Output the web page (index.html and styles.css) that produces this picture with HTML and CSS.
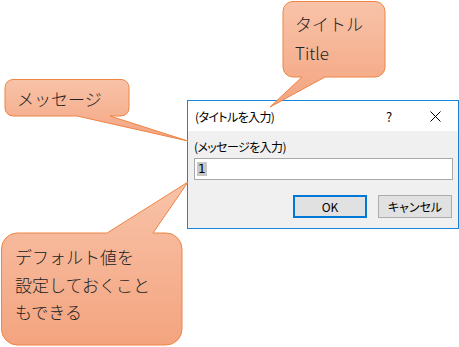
FILE: index.html
```html
<!DOCTYPE html>
<html lang="ja">
<head>
<meta charset="UTF-8" />
<meta name="viewport" content="width=device-width, initial-scale=1.0" />
<title>InputBox</title>
<link rel="stylesheet" href="styles.css">
</head>
<body>

<div class="dialog">
  <div class="titlebar">
    <span class="title">(タイトルを入力)</span>
    <span class="tb-btn">?</span>
    <span class="tb-btn">
      <svg width="11" height="11" viewBox="0 0 11 11"><path d="M0.5 0.5 L10.5 10.5 M10.5 0.5 L0.5 10.5" stroke="#000" stroke-width="1" fill="none"/></svg>
    </span>
  </div>
  <div class="content">
    <div class="prompt">(メッセージを入力)</div>
    <div class="textbox"><span class="sel">1</span></div>
    <div class="buttons">
      <div class="btn btn-default">OK</div>
      <div class="btn">キャンセル</div>
    </div>
  </div>
</div>

<!-- callouts drawn over the dialog -->
<svg class="callouts" width="459" height="347" viewBox="0 0 459 347">
  <defs>
    <linearGradient id="fill" x1="0" y1="0" x2="0" y2="1">
      <stop offset="0" stop-color="#f8c3a9"/>
      <stop offset="1" stop-color="#f4a47f"/>
    </linearGradient>
  </defs>
  <path d="M13,79.5 H121 A8 8 0 0 1 129,87.5 V108 A8 8 0 0 1 121,116 H110 L188,141 L77,116 H13 A8 8 0 0 1 5,108 V87.5 A8 8 0 0 1 13,79.5 Z"/>
  <path d="M293,1.5 H375 A10 10 0 0 1 385,11.5 V67 A10 10 0 0 1 375,77 H325 L270,107 L302,77 H293 A10 10 0 0 1 283,67 V11.5 A10 10 0 0 1 293,1.5 Z"/>
  <path d="M17,233 H107 L188,182 L153,233 H166 A16 16 0 0 1 182,249 V329 A16 16 0 0 1 166,345 H17 A16 16 0 0 1 1.5,329 V249 A16 16 0 0 1 17,233 Z"/>
</svg>

<div class="note note-msg">メッセージ</div>
<div class="note note-title">タイトル<br>Title</div>
<div class="note note-default">デフォルト値を<br>設定しておくこと<br>もできる</div>

</body>
</html>
```

FILE: styles.css
```css
body {
  margin: 0;
  width: 459px;
  height: 347px;
  background: #fff;
  position: relative;
  overflow: hidden;
  font-family: "Noto Sans CJK JP", "Noto Sans", sans-serif;
}

.dialog {
  margin: 100px 0 0 187px;
  width: 270px;
  height: 127px;
  border: 1px solid #1883d7;
  background: #f0f0f0;
  font-size: 12px;
  font-feature-settings: "palt";
  color: #000;
}

.titlebar {
  display: flex;
  align-items: center;
  height: 30px;
  background: #fff;
}

.title {
  flex: 1;
  padding-left: 7px;
  letter-spacing: -0.6px;
}

.tb-btn {
  width: 46px;
  height: 30px;
  display: flex;
  align-items: center;
  justify-content: center;
  font-size: 13px;
}

.content {
  padding: 8px 5px 10px 6px;
}

.prompt {
  height: 16px;
  line-height: 16px;
  letter-spacing: -0.6px;
}

.textbox {
  margin-top: 3px;
  height: 20px;
  border: 1px solid #a9a9a9;
  background: #fff;
  display: flex;
  align-items: center;
  padding-left: 2px;
}

.sel {
  background: #c8c8c8;
  font-family: "DejaVu Sans", sans-serif;
  font-size: 12px;
  line-height: 14px;
  padding: 0 1px;
}

.buttons {
  margin-top: 15px;
  margin-right: 1px;
  display: flex;
  justify-content: flex-end;
  gap: 11px;
}

.btn {
  box-sizing: border-box;
  width: 74px;
  height: 23px;
  border: 1px solid #adadad;
  background: #e1e1e1;
  display: flex;
  align-items: center;
  justify-content: center;
}

.btn-default {
  border: 2px solid #0078d7;
}

.callouts {
  position: absolute;
  left: 0;
  top: 0;
}

.callouts path {
  fill: url(#fill);
  stroke: #ef8444;
  stroke-width: 1;
}

.note {
  position: absolute;
  font-size: 17px;
  font-weight: 300;
  color: #222;
  white-space: nowrap;
}

.note-msg {
  left: 17px;
  top: 87px;
  line-height: 24px;
}

.note-title {
  left: 295px;
  top: 9px;
  line-height: 29px;
}

.note-default {
  left: 15px;
  top: 243px;
  line-height: 27.5px;
}
```
